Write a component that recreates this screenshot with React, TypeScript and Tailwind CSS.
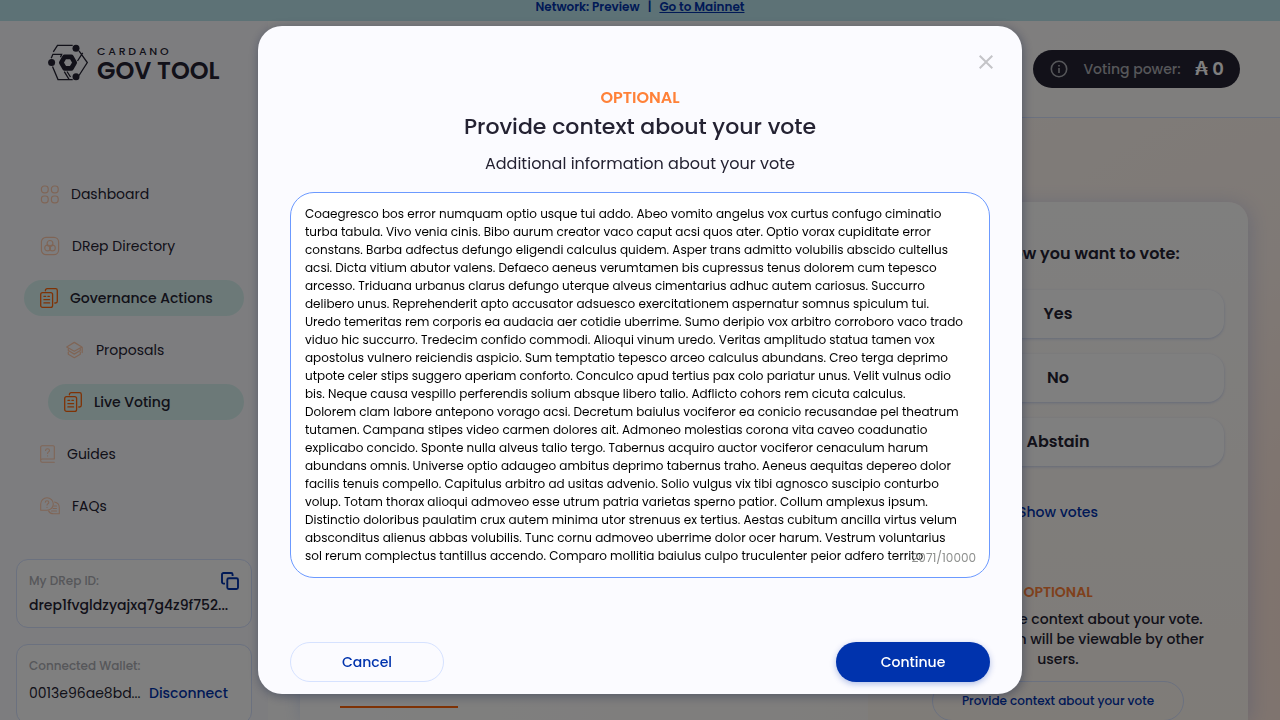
import { useEffect, useRef, useState } from "react";
import type { ReactNode } from "react";

const initialContext = [
  "Coaegresco bos error numquam optio usque tui addo. Abeo vomito angelus vox curtus confugo ciminatio",
  "turba tabula. Vivo venia cinis. Bibo aurum creator vaco caput acsi quos ater. Optio vorax cupiditate error",
  "constans. Barba adfectus defungo eligendi calculus quidem. Asper trans admitto volubilis abscido cultellus",
  "acsi. Dicta vitium abutor valens. Defaeco aeneus verumtamen bis cupressus tenus dolorem cum tepesco",
  "arcesso. Triduana urbanus clarus defungo uterque alveus cimentarius adhuc autem cariosus. Succurro",
  "delibero unus. Reprehenderit apto accusator adsuesco exercitationem aspernatur somnus spiculum tui.",
  "Uredo temeritas rem corporis ea audacia aer cotidie uberrime. Sumo deripio vox arbitro corroboro vaco trado",
  "viduo hic succurro. Tredecim confido commodi. Alioqui vinum uredo. Veritas amplitudo statua tamen vox",
  "apostolus vulnero reiciendis aspicio. Sum temptatio tepesco arceo calculus abundans. Creo terga deprimo",
  "utpote celer stips suggero aperiam conforto. Conculco apud tertius pax colo pariatur unus. Velit vulnus odio",
  "bis. Neque causa vespillo perferendis solium absque libero talio. Adflicto cohors rem cicuta calculus.",
  "Dolorem clam labore antepono vorago acsi. Decretum baiulus vociferor ea conicio recusandae pel theatrum",
  "tutamen. Campana stipes video carmen dolores ait. Admoneo molestias corona vita caveo coadunatio",
  "explicabo concido. Sponte nulla alveus talio tergo. Tabernus acquiro auctor vociferor cenaculum harum",
  "abundans omnis. Universe optio adaugeo ambitus deprimo tabernus traho. Aeneus aequitas depereo dolor",
  "facilis tenuis compello. Capitulus arbitro ad usitas advenio. Solio vulgus vix tibi agnosco suscipio conturbo",
  "volup. Totam thorax alioqui admoveo esse utrum patria varietas sperno patior. Collum amplexus ipsum.",
  "Distinctio doloribus paulatim crux autem minima utor strenuus ex tertius. Aestas cubitum ancilla virtus velum",
  "absconditus alienus abbas volubilis. Tunc cornu admoveo uberrime dolor ocer harum. Vestrum voluntarius",
  "sol rerum complectus tantillus accendo. Comparo mollitia baiulus culpo truculenter peior adfero territo",
].join("\n");

function Logo() {
  return (
    <a href="#home" className="flex items-center gap-2 text-[#242232]" aria-label="Cardano Gov Tool">
      <svg width="41" height="37" viewBox="0 0 41 37" fill="none" stroke="currentColor" strokeWidth="1.3">
        <path d="M5.3 7.900 9.500 1.400h15.200M3.200 14.200l1.700-3.900h8.800l-1.200 3M4.500 22.500l5.500 13.100h14.700M31 6.900l8.300 11.600L31 31.500M29.500 17l5.200-8.200M16.300 27.700l4.900 7.900M19 27.500l3.500 5.500" />
        <circle cx="3.600" cy="18.500" r="3.500" fill="currentColor" stroke="none" />
        <circle cx="28" cy="4.300" r="3.500" fill="currentColor" stroke="none" />
        <circle cx="28" cy="32.700" r="3.500" fill="currentColor" stroke="none" />
        <path d="M16.600 12.900h6.800l3.300 5.700-3.300 5.700h-6.800l-3.300-5.700z" strokeWidth="4.700" strokeLinejoin="round" />
      </svg>
      <span className="flex flex-col pt-0.5">
        <span className="text-[11px] leading-4 font-medium tracking-[0.25em]">CARDANO</span>
        <span className="text-[24px] leading-6 font-semibold">GOV TOOL</span>
      </span>
    </a>
  );
}

function DashboardIcon() {
  return (
    <svg width="19" height="19" viewBox="0 0 19 19" fill="none" stroke="currentColor" strokeWidth="1.2">
      <rect x="1.400" y="1" width="6.800" height="6.800" rx="2.800" />
      <rect x="11.400" y="1" width="6.800" height="6.800" rx="2.800" />
      <rect x="1.400" y="11" width="6.800" height="6.800" rx="2.800" />
      <rect x="11.400" y="11" width="6.800" height="6.800" rx="2.800" />
    </svg>
  );
}

function DirectoryIcon() {
  return (
    <svg width="20" height="20" viewBox="0 0 20 20" fill="none" stroke="currentColor" strokeWidth="1.2">
      <rect x="1.4" y="1.4" width="17.2" height="17.2" rx="4.6" />
      <circle cx="10" cy="7.4" r="2.9" />
      <circle cx="7.6" cy="12" r="2.9" />
      <circle cx="12.4" cy="12" r="2.9" />
    </svg>
  );
}

function ActionsIcon() {
  return (
    <svg width="18" height="20" viewBox="0 0 18 20" fill="none" stroke="currentColor" strokeWidth="1.3" strokeLinecap="round">
      <path d="M5.4 2.8V2.4C5.4 1.400 6.200.7 7.100.7h8.500c.9 0 1.700.8 1.700 1.700v10.900c0 .9-.8 1.700-1.700 1.700h-.8" />
      <rect x=".7" y="4.700" width="11.900" height="14.600" rx="1.900" />
      <path d="M3.900 8.300h1.800M7.900 8.300h1.500M3.900 11.700h5.700M3.900 14.900h5.700" />
    </svg>
  );
}

function ProposalsIcon() {
  return (
    <svg width="20" height="18" viewBox="0 0 20 18" fill="none" stroke="currentColor" strokeWidth="1.3" strokeLinejoin="round" strokeLinecap="round">
      <path d="m2.700 6 7.600-4.600L17.900 6l-7.600 4.300zM4.300 7.400v2.100l6 3.600 6-3.600V7.400M4.300 11.200v2l6 3.500 6-3.500v-2M18.200 6.400v5.200" />
    </svg>
  );
}

function GuidesIcon() {
  return (
    <svg width="15" height="18" viewBox="0 0 15 18" fill="none" stroke="currentColor" strokeWidth="1.100" strokeLinecap="round">
      <path d="M14.300 14V1.700c0-.5-.4-1-1-1H2.200C1.300.7.700 1.300.7 2.200v13.600c0 .8.700 1.500 1.500 1.500h12.100M.7 15.300c0-.8.7-1.300 1.500-1.300h12.100" />
      <path d="M5.600 5.400c0-1.100.9-1.700 1.900-1.700s2 .7 2 1.800c0 1.400-1.900 1.500-1.900 3M7.600 10.800v.2" />
    </svg>
  );
}

function FaqsIcon() {
  return (
    <svg width="20" height="18" viewBox="0 0 20 18" fill="none" stroke="currentColor" strokeWidth="1.100" strokeLinecap="round" strokeLinejoin="round">
      <path d="M7 .7C3.500.7.700 3.500.700 7v6.300H7c3.500 0 6.300-2.800 6.300-6.300S10.500.7 7 .7z" />
      <path d="M5.300 5.300c0-1 .8-1.600 1.700-1.600s1.800.6 1.800 1.700c0 1.300-1.800 1.400-1.800 2.700M7 10.300v.2M14.500 5c2.700.5 4.800 2.900 4.800 5.800v6h-5.800c-2.200 0-4-1.200-5-2.900M13.800 9h2.700M13 11.500h3.500M11.500 14h5" />
    </svg>
  );
}

type NavItemProps = { label: string; icon: ReactNode; active?: boolean; nested?: boolean };

function NavItem({ label, icon, active, nested }: NavItemProps) {
  return (
    <li className={nested ? "pl-6" : ""}>
      <a
        href="#nav"
        className={
          "flex h-9 items-center gap-3 rounded-full px-4 text-sm whitespace-nowrap text-[#242232] " +
          (active ? "bg-[#d8f3f1] font-medium" : "")
        }
      >
        <span className={active ? "text-[#ff640a]" : "text-[#ffcbad]"}>{icon}</span>
        {label}
      </a>
    </li>
  );
}

function Sidebar() {
  return (
    <aside className="flex w-[268px] shrink-0 flex-col bg-[#fbfbff]">
      <div className="px-12 pt-5">
        <Logo />
      </div>
      <nav className="mt-[93px] px-6" aria-label="Main">
        <ul className="flex flex-col gap-4">
          <NavItem label="Dashboard" icon={<DashboardIcon />} />
          <NavItem label="DRep Directory" icon={<DirectoryIcon />} />
          <NavItem label="Governance Actions" icon={<ActionsIcon />} active />
          <NavItem label="Proposals" icon={<ProposalsIcon />} nested />
          <NavItem label="Live Voting" icon={<ActionsIcon />} active nested />
          <NavItem label="Guides" icon={<GuidesIcon />} />
          <NavItem label="FAQs" icon={<FaqsIcon />} />
        </ul>
      </nav>
      <div className="mt-[35px] flex flex-col gap-4 px-4">
        <section className="rounded-xl border border-[#d6e2ff] bg-white px-3 pt-[11px] pb-3">
          <div className="flex h-5 items-center justify-between">
            <span className="text-xs font-medium text-[#adaeb4]">My DRep ID:</span>
            <button type="button" aria-label="Copy DRep ID" className="text-[#0033ad]">
              <svg width="18" height="18" viewBox="0 0 18 18" fill="none" stroke="currentColor" strokeWidth="1.900">
                <rect x="6.300" y="6.300" width="10.700" height="10.700" rx="1.500" />
                <path d="M4 11.600H2.500C1.700 11.600 1 11 1 10.100V2.500C1 1.700 1.700 1 2.500 1h7.600c.9 0 1.500.7 1.500 1.500V4" />
              </svg>
            </button>
          </div>
          <p className="mt-1 text-sm leading-5 font-medium whitespace-nowrap text-[#242232]">drep1fvgldzyajxq7g4z9f752...</p>
        </section>
        <section className="rounded-xl border border-[#d6e2ff] bg-white px-3 pt-[11px] pb-5">
          <p className="text-xs leading-5 font-medium text-[#adaeb4]">Connected Wallet:</p>
          <div className="mt-[7px] flex items-center gap-2 text-sm">
            <span className="w-28 text-[#242232]">0013e96ae8bd...</span>
            <button type="button" className="font-medium text-[#0033ad]">
              Disconnect
            </button>
          </div>
        </section>
      </div>
    </aside>
  );
}

function VoteCard() {
  return (
    <div className="mx-8 mt-[84px] flex flex-1 overflow-hidden rounded-t-[20px] shadow-[2px_2px_20px_0_rgba(47,98,220,0.2)]">
      <div className="flex flex-1 items-end bg-white/60 px-10">
        <div className="mb-3 h-0.5 w-[118px] bg-[#ff640a]" />
      </div>
      <section className="flex w-[380px] shrink-0 flex-col items-center bg-linear-to-b from-[#fffefd] to-[#fff8f1] px-6 pt-10 text-[#242232]">
        <h2 className="text-base font-semibold">Choose how you want to vote:</h2>
        <div className="mt-6 flex w-full flex-col gap-4">
          {["Yes", "No", "Abstain"].map((choice) => (
            <button
              key={choice}
              type="button"
              className="h-12 rounded-2xl bg-white text-base font-semibold shadow-[0_1px_3px_0_rgba(47,98,220,0.25)]"
            >
              {choice}
            </button>
          ))}
        </div>
        <button type="button" className="mt-9 text-sm leading-5 font-medium text-[#0033ad]">
          Show votes
        </button>
        <p className="mt-[60px] text-sm leading-5 font-semibold text-[#ff8138]">OPTIONAL</p>
        <p className="mt-[7px] w-[312px] text-center text-sm leading-5 font-medium">
          You can provide context about your vote. This information will be viewable by other users.
        </p>
        <button
          type="button"
          className="mt-3 h-10 w-[252px] shrink-0 rounded-full border border-[#d6e2ff] text-xs font-medium text-[#0033ad]"
        >
          Provide context about your vote
        </button>
      </section>
    </div>
  );
}

function Header() {
  return (
    <header className="flex h-[97px] shrink-0 items-center justify-end border-b border-[#d6e2ff] bg-white/70 px-10">
      <div className="flex h-[38px] w-[207px] items-center justify-between rounded-full bg-[#242232] px-4 text-white">
        <svg width="20" height="20" viewBox="0 0 20 20" fill="none" stroke="#adaeb4" strokeWidth="1.600">
          <circle cx="10" cy="10" r="7.700" />
          <path d="M10 9v5M10 6v1.600" />
        </svg>
        <span className="text-sm font-medium text-[#adaeb4]">Voting power:</span>
        <span className="text-lg font-semibold whitespace-nowrap">₳ 0</span>
      </div>
    </header>
  );
}

function ContextDialog() {
  const [text, setText] = useState(initialContext);
  const field = useRef<HTMLTextAreaElement>(null);

  useEffect(() => {
    const el = field.current;
    if (!el) return;
    el.focus();
    el.setSelectionRange(el.value.length, el.value.length);
  }, []);

  return (
    <div className="fixed inset-0 flex items-center justify-center bg-black/50">
      <div
        role="dialog"
        aria-modal="true"
        aria-labelledby="context-title"
        className="flex w-[764px] max-w-full flex-col rounded-3xl bg-[#fbfbff] px-8 pt-6 pb-3 text-[#242232] shadow-[1px_2px_11px_0_rgba(0,18,61,0.37)]"
      >
        <div className="-mr-2 flex justify-end">
          <button type="button" aria-label="Close" className="text-[#c4c4c8]">
            <svg width="24" height="24" viewBox="0 0 24 24" fill="currentColor">
              <path d="M19 6.410 17.590 5 12 10.590 6.410 5 5 6.410 10.590 12 5 17.590 6.410 19 12 13.410 17.590 19 19 17.590 13.410 12z" />
            </svg>
          </button>
        </div>
        <div className="mt-3 flex flex-col items-center text-center">
          <p className="text-base leading-6 font-semibold text-[#ff8138]">OPTIONAL</p>
          <h1 id="context-title" className="text-[22px] leading-[34px] font-medium">
            Provide context about your vote
          </h1>
          <label htmlFor="context" className="mt-2 text-base leading-6">
            Additional information about your vote
          </label>
        </div>
        <div className="relative mt-4 flex">
          <textarea
            id="context"
            ref={field}
            value={text}
            wrap="off"
            maxLength={10000}
            onChange={(e) => setText(e.target.value)}
            className="h-[386px] w-full resize-none overflow-hidden rounded-3xl border border-[#6c9aff] bg-white px-[14px] py-3 text-xs leading-[18px] text-black outline-none"
          />
          <span className="pointer-events-none absolute right-[14px] bottom-[11px] text-xs leading-[18px] text-[#8e908e]">
            2071/10000
          </span>
        </div>
        <div className="mt-16 flex justify-between text-sm font-medium">
          <button type="button" className="h-10 w-[154px] rounded-full border border-[#d6e2ff] text-[#0033ad]">
            Cancel
          </button>
          <button
            type="button"
            className="h-10 w-[154px] rounded-full bg-[#0033ad] text-white shadow-[0_2px_6px_0_rgba(0,51,173,0.3)]"
          >
            Continue
          </button>
        </div>
      </div>
    </div>
  );
}

export default function App() {
  return (
    <div className="flex h-screen flex-col overflow-hidden bg-white font-['Poppins','Inter',sans-serif]">
      <div className="flex h-[21px] shrink-0 items-end justify-center gap-2 bg-[#bbe4ed] pb-1 text-xs leading-5 font-semibold text-[#0033ad]">
        <span>Network: Preview</span>
        <span>|</span>
        <a href="#mainnet" className="underline">
          Go to Mainnet
        </a>
      </div>
      <div className="flex min-h-0 flex-1">
        <Sidebar />
        <main className="flex min-w-0 flex-1 flex-col bg-[radial-gradient(circle_at_115%_85%,#ffe0d2_0%,#fff3ec_30%,#fffaf5_60%,#ffffff_90%)]">
          <Header />
          <VoteCard />
        </main>
      </div>
      <ContextDialog />
    </div>
  );
}
